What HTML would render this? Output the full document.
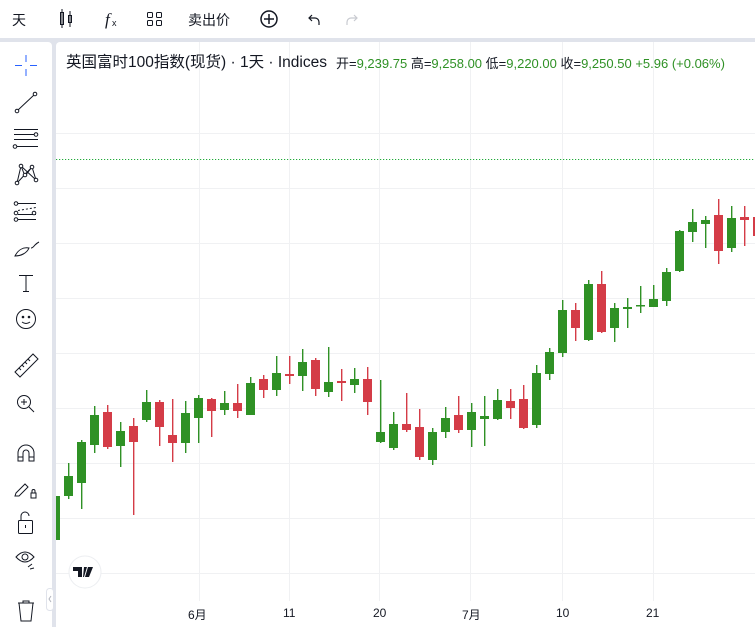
<!DOCTYPE html>
<html><head><meta charset="utf-8"><style>
body{margin:0;width:755px;height:627px;overflow:hidden;background:#e0e3eb;font-family:"Liberation Sans","Noto Sans CJK SC",sans-serif;position:relative}
.top{position:absolute;left:0;top:0;width:755px;height:38px;background:#fff}
.side{position:absolute;left:0;top:42px;width:52px;height:585px;background:#fff;border-top-right-radius:4px}
.chart{position:absolute;left:56px;top:42px;width:699px;height:585px;background:#fff;border-top-left-radius:4px}
.t{position:absolute;font-size:14px;color:#131722}
</style></head><body>
<div class="top"></div>
<div class="side"></div>
<div class="chart"></div>
<svg width="755" height="627" style="position:absolute;left:0;top:0" fill="none" stroke="#131722" stroke-width="1">
<text x="12" y="25" font-size="14" fill="#131722" stroke="none" font-family="Noto Sans CJK SC,sans-serif">天</text>
<g><rect x="60.5" y="12.5" width="3" height="12"/><line x1="62" y1="9" x2="62" y2="28"/><rect x="68.5" y="15.5" width="3" height="7"/><line x1="70" y1="11" x2="70" y2="27"/></g>
<text x="105" y="25" font-size="17" fill="#131722" stroke="none" font-style="italic" font-family="Liberation Serif,serif">f</text>
<text x="112" y="26" font-size="9" fill="#131722" stroke="none">x</text>
<g><rect x="147.5" y="12.5" width="5" height="5" rx="1"/><rect x="156.5" y="12.5" width="5" height="5" rx="1"/><rect x="147.5" y="20.5" width="5" height="5" rx="1"/><rect x="156.5" y="20.5" width="5" height="5" rx="1"/></g>
<text x="188" y="25" font-size="14" fill="#131722" stroke="none" font-family="Noto Sans CJK SC,sans-serif">卖出价</text>
<circle cx="269" cy="19" r="8" stroke-width="1.5"/><line x1="264" y1="19" x2="274" y2="19" stroke-width="1.5"/><line x1="269" y1="14" x2="269" y2="24" stroke-width="1.5"/>
<path d="M312 15l-3 3 3 3M309 18h6a4 4 0 0 1 4 4v3" stroke-width="1.2"/>
<path d="M354 15l3 3-3 3M357 18h-6a4 4 0 0 0-4 4v3" stroke="#c8cad0" stroke-width="1.2"/>
<g stroke="#2962ff"><line x1="26" y1="55" x2="26" y2="62"/><line x1="26" y1="69" x2="26" y2="76"/><line x1="15" y1="65.5" x2="22" y2="65.5"/><line x1="30" y1="65.5" x2="37" y2="65.5"/></g>
<line x1="18" y1="110" x2="34" y2="95"/><circle cx="17" cy="111" r="1.8" fill="#fff"/><circle cx="35" cy="94" r="1.8" fill="#fff"/>
<g><line x1="14" y1="129.5" x2="38" y2="129.5"/><line x1="14" y1="134.5" x2="34" y2="134.5"/><line x1="14" y1="139.5" x2="38" y2="139.5"/><line x1="17" y1="146.5" x2="38" y2="146.5"/><circle cx="36" cy="134.5" r="1.8" fill="#fff"/><circle cx="15" cy="146.5" r="1.8" fill="#fff"/></g>
<path d="M17 183L21 166L25 176L32 167L36 180M21 166L36 180M17 183L32 167"/><circle cx="17" cy="183" r="1.8" fill="#fff"/><circle cx="21" cy="166" r="1.8" fill="#fff"/><circle cx="25" cy="175" r="1.8" fill="#fff"/><circle cx="32" cy="167" r="1.8" fill="#fff"/><circle cx="36" cy="180" r="1.8" fill="#fff"/>
<g><line x1="18" y1="203.5" x2="36" y2="203.5"/><line x1="18" y1="210.5" x2="36" y2="207.5" stroke-dasharray="2 2"/><line x1="18" y1="214.5" x2="36" y2="214.5"/><line x1="18" y1="219.5" x2="36" y2="219.5"/><circle cx="16" cy="203.5" r="1.8" fill="#fff"/><circle cx="16" cy="213" r="1.8" fill="#fff"/><circle cx="16" cy="219.5" r="1.8" fill="#fff"/><circle cx="34" cy="213" r="1.8" fill="#fff"/></g>
<path d="M15 256c3-6 8-9 14-8-2 5-8 8-14 8zM31 248c2 0 3-2 4-3 1-1 2-2 4-3"/>
<path d="M19 275.5h14M26 275.5v16M23 291.5h6"/>
<circle cx="26" cy="319" r="9.5"/><circle cx="23" cy="317" r=".8" fill="#131722"/><circle cx="29" cy="317" r=".8" fill="#131722"/><path d="M22 322q4 3 8 0"/>
<path d="M15 372l18-18 5 5-18 18zM19 368l2 2M22 365l2 2M25 362l2 2M28 359l2 2"/>
<circle cx="24" cy="402" r="6.5"/><line x1="29" y1="407" x2="34" y2="412"/><line x1="21" y1="402" x2="27" y2="402"/><line x1="24" y1="399" x2="24" y2="405"/>
<path d="M18 461v-8a8 8 0 0 1 16 0v8h-5v-8a3 3 0 0 0-6 0v8zM18 457h5M29 457h5"/>
<path d="M16 493l9-9 3 3-9 9h-4zM31 493h5v5h-5zM32 493v-2a1.5 1.5 0 0 1 3 0v2"/>
<rect x="18.5" y="520.5" width="14" height="13" rx="1"/><path d="M21 520v-4a4 4 0 0 1 8 0"/><line x1="25.5" y1="525" x2="25.5" y2="528"/>
<path d="M16 557q9-10 18 0q-9 10-18 0z"/><circle cx="25" cy="557" r="3"/><path d="M28 567l4-3M30 569l4-1"/>
<path d="M18 603h16M23 603v-2h6v2M19 603l2 18h10l2-18"/>
<rect x="46.5" y="588.5" width="7" height="22" rx="3" stroke="#e0e3eb" fill="#fff"/><path d="M51 596l-2 3 2 3" stroke="#b2b5be"/>
<g stroke="#f0f1f3">
<line x1="56" y1="133.5" x2="755" y2="133.5"/><line x1="56" y1="188.5" x2="755" y2="188.5"/><line x1="56" y1="243.5" x2="755" y2="243.5"/><line x1="56" y1="298.5" x2="755" y2="298.5"/><line x1="56" y1="353.5" x2="755" y2="353.5"/><line x1="56" y1="408.5" x2="755" y2="408.5"/><line x1="56" y1="463.5" x2="755" y2="463.5"/><line x1="56" y1="518.5" x2="755" y2="518.5"/><line x1="56" y1="573.5" x2="755" y2="573.5"/>
<line x1="199.5" y1="42" x2="199.5" y2="601"/><line x1="289.5" y1="42" x2="289.5" y2="601"/><line x1="379.5" y1="42" x2="379.5" y2="601"/><line x1="470.5" y1="42" x2="470.5" y2="601"/><line x1="562.5" y1="42" x2="562.5" y2="601"/><line x1="653.5" y1="42" x2="653.5" y2="601"/>
</g>
<line x1="56" y1="159.5" x2="755" y2="159.5" stroke="#22ab3a" stroke-dasharray="1.2 1.8"/>
<g stroke="none" fill="#2f9125">
<rect x="56" y="496" width="4" height="44"/>
<rect x="68" y="463" width="1.4" height="36"/><rect x="64" y="476" width="9" height="20"/>
<rect x="81" y="440" width="1.4" height="69"/><rect x="77" y="442" width="9" height="41"/>
<rect x="94" y="406" width="1.4" height="47"/><rect x="90" y="415" width="9" height="30"/>
<rect x="120" y="422" width="1.4" height="45"/><rect x="116" y="431" width="9" height="15"/>
<rect x="146" y="390" width="1.4" height="32"/><rect x="142" y="402" width="9" height="18"/>
<rect x="185" y="401" width="1.4" height="52"/><rect x="181" y="413" width="9" height="30"/>
<rect x="198" y="395" width="1.4" height="48"/><rect x="194" y="398" width="9" height="20"/>
<rect x="224" y="391" width="1.4" height="24"/><rect x="220" y="403" width="9" height="7"/>
<rect x="250" y="377" width="1.4" height="38"/><rect x="246" y="383" width="9" height="32"/>
<rect x="276" y="356" width="1.4" height="40"/><rect x="272" y="373" width="9" height="17"/>
<rect x="302" y="349" width="1.4" height="42"/><rect x="298" y="362" width="9" height="14"/>
<rect x="328" y="347" width="1.4" height="50"/><rect x="324" y="382" width="9" height="10"/>
<rect x="354" y="368" width="1.4" height="25"/><rect x="350" y="379" width="9" height="6"/>
<rect x="380" y="380" width="1.4" height="63"/><rect x="376" y="432" width="9" height="10"/>
<rect x="393" y="412" width="1.4" height="38"/><rect x="389" y="424" width="9" height="24"/>
<rect x="432" y="428" width="1.4" height="37"/><rect x="428" y="432" width="9" height="28"/>
<rect x="445" y="407" width="1.4" height="31"/><rect x="441" y="418" width="9" height="14"/>
<rect x="471" y="403" width="1.4" height="44"/><rect x="467" y="412" width="9" height="18"/>
<rect x="484" y="396" width="1.4" height="50"/><rect x="480" y="416" width="9" height="3"/>
<rect x="497" y="389" width="1.4" height="31"/><rect x="493" y="400" width="9" height="19"/>
<rect x="536" y="365" width="1.4" height="63"/><rect x="532" y="373" width="9" height="52"/>
<rect x="549" y="348" width="1.4" height="32"/><rect x="545" y="352" width="9" height="22"/>
<rect x="562" y="300" width="1.4" height="57"/><rect x="558" y="310" width="9" height="43"/>
<rect x="588" y="280" width="1.4" height="61"/><rect x="584" y="284" width="9" height="56"/>
<rect x="614" y="303" width="1.4" height="39"/><rect x="610" y="308" width="9" height="20"/>
<rect x="627" y="298" width="1.4" height="30"/><rect x="623" y="307" width="9" height="2"/>
<rect x="640" y="286" width="1.4" height="27"/><rect x="636" y="305" width="9" height="1.5"/>
<rect x="653" y="285" width="1.4" height="22"/><rect x="649" y="299" width="9" height="8"/>
<rect x="666" y="268" width="1.4" height="38"/><rect x="662" y="272" width="9" height="29"/>
<rect x="679" y="230" width="1.4" height="42"/><rect x="675" y="231" width="9" height="40"/>
<rect x="692" y="209" width="1.4" height="33"/><rect x="688" y="222" width="9" height="10"/>
<rect x="705" y="216" width="1.4" height="32"/><rect x="701" y="220" width="9" height="4"/>
<rect x="731" y="206" width="1.4" height="46"/><rect x="727" y="218" width="9" height="30"/>
</g>
<g stroke="none" fill="#d43c47">
<rect x="107" y="405" width="1.4" height="44"/><rect x="103" y="412" width="9" height="35"/>
<rect x="133" y="418" width="1.4" height="97"/><rect x="129" y="426" width="9" height="16"/>
<rect x="159" y="400" width="1.4" height="46"/><rect x="155" y="402" width="9" height="25"/>
<rect x="172" y="399" width="1.4" height="63"/><rect x="168" y="435" width="9" height="8"/>
<rect x="211" y="398" width="1.4" height="39"/><rect x="207" y="399" width="9" height="12"/>
<rect x="237" y="384" width="1.4" height="34"/><rect x="233" y="403" width="9" height="8"/>
<rect x="263" y="375" width="1.4" height="23"/><rect x="259" y="379" width="9" height="11"/>
<rect x="289" y="356" width="1.4" height="28"/><rect x="285" y="374" width="9" height="2"/>
<rect x="315" y="358" width="1.4" height="38"/><rect x="311" y="360" width="9" height="29"/>
<rect x="341" y="369" width="1.4" height="32"/><rect x="337" y="381" width="9" height="2"/>
<rect x="367" y="367" width="1.4" height="48"/><rect x="363" y="379" width="9" height="23"/>
<rect x="406" y="393" width="1.4" height="39"/><rect x="402" y="424" width="9" height="6"/>
<rect x="419" y="409" width="1.4" height="51"/><rect x="415" y="427" width="9" height="30"/>
<rect x="458" y="396" width="1.4" height="37"/><rect x="454" y="415" width="9" height="15"/>
<rect x="510" y="389" width="1.4" height="30"/><rect x="506" y="401" width="9" height="7"/>
<rect x="523" y="385" width="1.4" height="44"/><rect x="519" y="399" width="9" height="29"/>
<rect x="575" y="303" width="1.4" height="38"/><rect x="571" y="310" width="9" height="18"/>
<rect x="601" y="271" width="1.4" height="62"/><rect x="597" y="284" width="9" height="48"/>
<rect x="718" y="199" width="1.4" height="65"/><rect x="714" y="215" width="9" height="36"/>
<rect x="744" y="206" width="1.4" height="40"/><rect x="740" y="217" width="9" height="3"/>
<rect x="753" y="217" width="2" height="19"/>
</g>
<circle cx="85" cy="572" r="16" fill="#fff" stroke="#eceef1"/>
<path d="M73 567h9v10h-4v-6h-5zM84 567h3l-3 10h-1zM88 567h5l-4 10h-4z" fill="#131722" stroke="none"/>
</svg>
<div class="t" style="left:66px;top:50px;font-size:15.5px;white-space:nowrap">英国富时100指数(现货) · 1天 · Indices</div>
<div class="t" style="left:336px;top:53px;font-size:13px;white-space:nowrap">开=<span style="color:#2f9125">9,239.75</span> 高=<span style="color:#2f9125">9,258.00</span> 低=<span style="color:#2f9125">9,220.00</span> 收=<span style="color:#2f9125">9,250.50</span> <span style="color:#2f9125">+5.96 (+0.06%)</span></div>
<div class="t" style="left:188px;top:606px;font-size:12px">6月</div>
<div class="t" style="left:283px;top:606px;font-size:12px">11</div>
<div class="t" style="left:373px;top:606px;font-size:12px">20</div>
<div class="t" style="left:462px;top:606px;font-size:12px">7月</div>
<div class="t" style="left:556px;top:606px;font-size:12px">10</div>
<div class="t" style="left:646px;top:606px;font-size:12px">21</div>
</body></html>
